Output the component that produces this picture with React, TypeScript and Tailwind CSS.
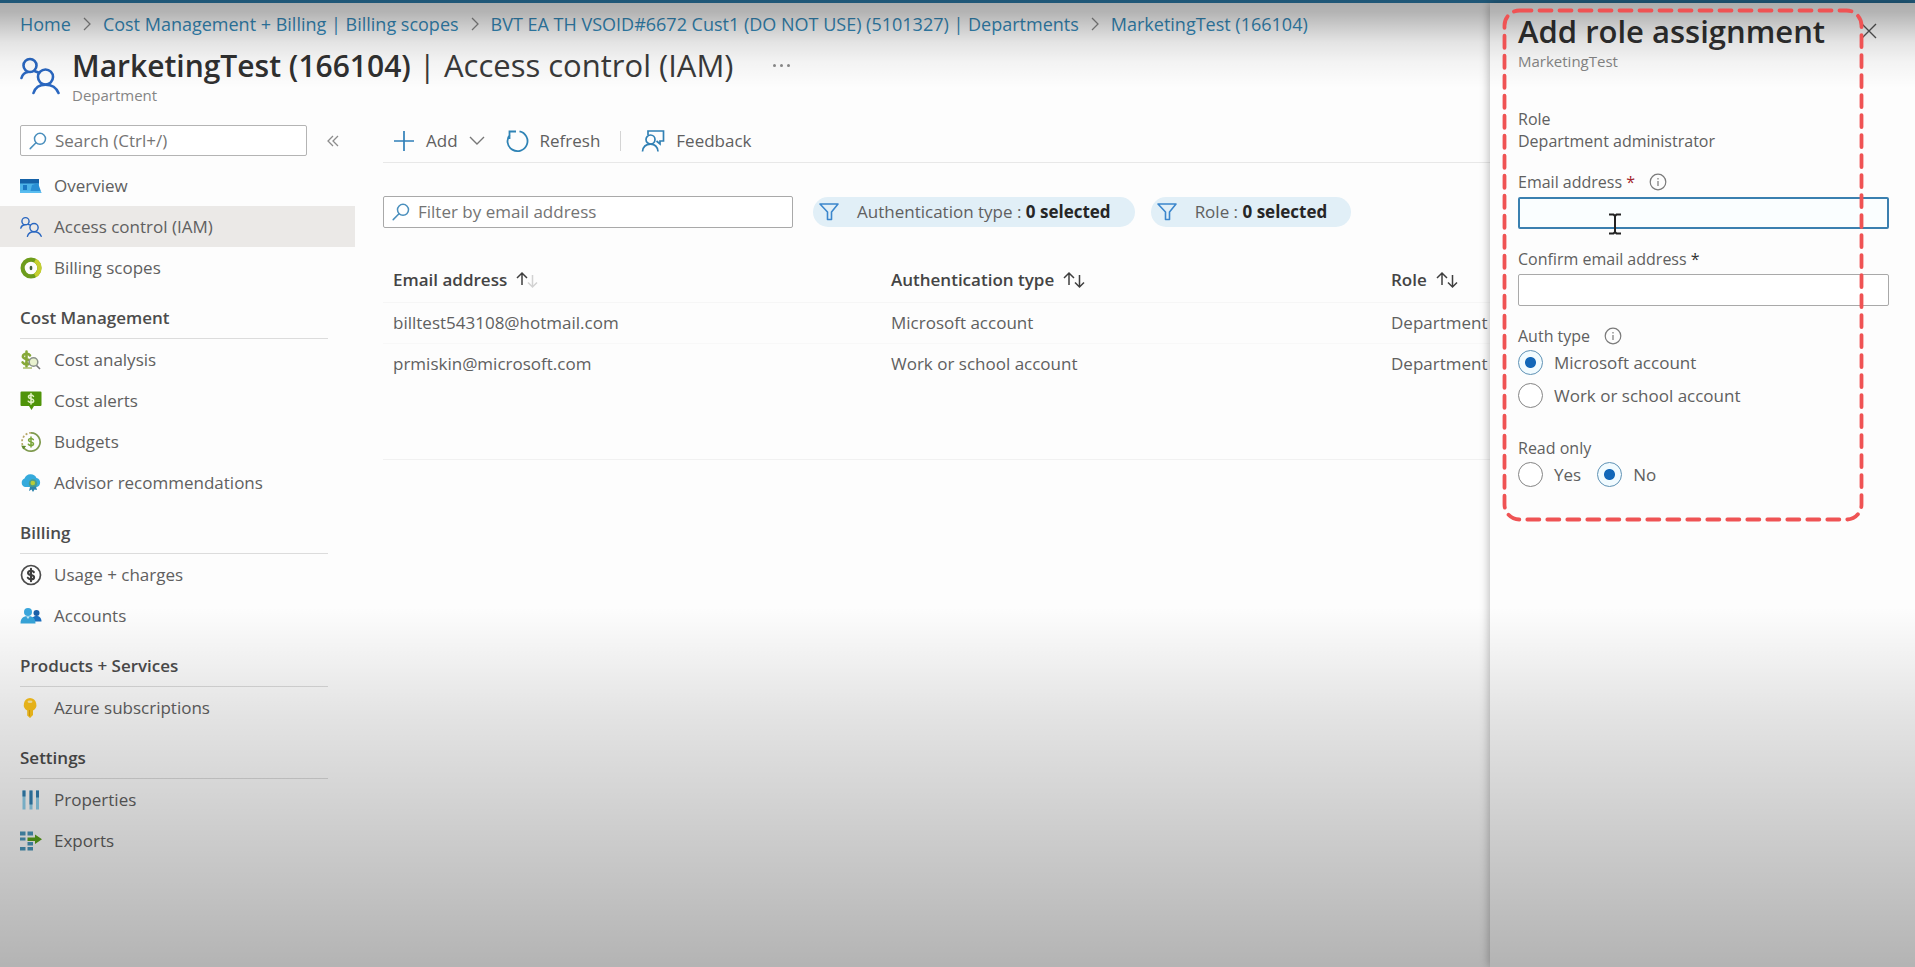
import React, { useState } from "react";

type IconProps = { className?: string };

const Dollar = ({ x, y, s, color, w = 1.5 }: { x: number; y: number; s: number; color: string; w?: number }) => (
  <g transform={`translate(${x} ${y}) scale(${s})`} fill="none" stroke={color} strokeWidth={w} strokeLinecap="round">
    <path d="M2.6-2.6C2-3.6 1-3.9 0-3.9c-1.6 0-2.7.8-2.7 2C-2.7.7 2.8-.6 2.8 2c0 1.200-1.200 2-2.800 2-1.300 0-2.300-.5-2.900-1.500M0-5.600v11.200" />
  </g>
);

const People = ({ className }: IconProps) => (
  <svg viewBox="0 0 40 38" className={className} fill="none" stroke="#2a67c0" strokeWidth="2.600" strokeLinecap="round">
    <circle cx="10" cy="8.500" r="6.500" />
    <path d="M1.500 21C2.500 17.500 5 15.500 8 15" />
    <circle cx="25.500" cy="20" r="7.500" />
    <path d="M13.500 36C15 31 19.500 27.700 25.500 27.700S36.500 31 38.500 36M15 14.200l4 1.500" />
  </svg>
);

const OverviewIcon = ({ className }: IconProps) => (
  <svg viewBox="0 0 22 22" className={className}>
    <path d="M0 4h19v14H0z" fill="#4db3e8" />
    <path d="M0 4h19v4.500H0z" fill="#1462a8" />
    <path d="M3 10h4v5H3z" fill="#1b78c4" />
    <path d="M12 10l6-2 3.500 10H10z" fill="#2a8fd4" />
    <path d="M0 16h21v2H0z" fill="#59bdf0" />
  </svg>
);

const ScopesIcon = ({ className }: IconProps) => (
  <svg viewBox="0 0 22 22" className={className} fill="none">
    <circle cx="11" cy="11" r="8.400" stroke="#6d9c1c" strokeWidth="4.200" />
    <path d="M15 3.600a8.400 8.400 0 0 1 0 14.800" stroke="#c6cf2e" strokeWidth="4.200" />
    <ellipse cx="11" cy="11" rx="1.400" ry="2.200" fill="#44603c" />
  </svg>
);

const AnalysisIcon = ({ className }: IconProps) => (
  <svg viewBox="0 0 22 22" className={className} fill="none">
    <Dollar x={6.5} y={10} s={1.35} color="#86a838" w={1.9} />
    <circle cx="13.500" cy="13" r="4.300" stroke="#8b938a" strokeWidth="1.500" fill="#e9f2cf" />
    <path d="M16.500 16.500l3.500 3.500" stroke="#777" strokeWidth="1.600" />
    <path d="M3 19h9" stroke="#a8be6a" strokeWidth="1.500" />
  </svg>
);

const AlertsIcon = ({ className }: IconProps) => (
  <svg viewBox="0 0 22 22" className={className}>
    <path d="M1.500 1.500h19a1 1 0 0 1 1 1v12.500a1 1 0 0 1-1 1H14l-2.500 4-2.500-4H1.500a1 1 0 0 1-1-1V2.500a1 1 0 0 1 1-1z" fill="#4f9409" />
    <Dollar x={11} y={8.8} s={0.95} color="#e2f2c4" w={1.6} />
  </svg>
);

const BudgetsIcon = ({ className }: IconProps) => (
  <svg viewBox="0 0 22 22" className={className} fill="none">
    <path d="M11 1.800A9.200 9.200 0 1 1 3.500 16.500" stroke="#7f9a4e" strokeWidth="1.700" />
    <path d="M2.500 14A9.200 9.200 0 0 1 11 1.800" stroke="#b7a86a" strokeWidth="1.700" strokeDasharray="2 1.800" />
    <path d="M1.200 14.500l5 .5-3 3.500z" fill="#5f8a2a" />
    <Dollar x={11} y={11} s={0.9} color="#7aa53a" w={1.7} />
  </svg>
);

const AdvisorIcon = ({ className }: IconProps) => (
  <svg viewBox="0 0 22 22" className={className}>
    <path d="M5 15a4.500 4.500 0 0 1-.5-8.500A6.500 6.500 0 0 1 16.500 6 4.700 4.700 0 0 1 17 15z" fill="#35aadc" />
    <circle cx="13" cy="11.500" r="4.200" fill="#4a9d8c" />
    <circle cx="12.800" cy="11" r="2.300" fill="#b6cc3a" />
    <path d="M10 15l-1 4 2.500-1.500L13 20l1.500-2.500L17 18l-1-3.500z" fill="#2b83ad" />
  </svg>
);

const UsageIcon = ({ className }: IconProps) => (
  <svg viewBox="0 0 22 22" className={className} fill="none">
    <circle cx="11" cy="11" r="9.500" stroke="#4c4c4c" strokeWidth="1.700" />
    <Dollar x={11} y={11} s={1.1} color="#3c3c3c" w={1.9} />
  </svg>
);

const AccountsIcon = ({ className }: IconProps) => (
  <svg viewBox="0 0 22 22" className={className}>
    <circle cx="16.500" cy="8" r="3" fill="#1b5fa8" />
    <path d="M11.500 16.500c0-4 2-5.500 5-5.500s5 2 5 5.500z" fill="#1b6fc0" />
    <circle cx="8" cy="7" r="4" fill="#3aa6dc" />
    <path d="M.5 18.500C.5 13 3.500 11 8 11s7.500 2 7.500 7.500z" fill="#36a3d8" />
    <path d="M6 11.200l2 2.800 2-2.800z" fill="#bfe6f7" />
  </svg>
);

const KeyIcon = ({ className }: IconProps) => (
  <svg viewBox="0 0 22 22" className={className}>
    <path d="M10 1a6.700 6.700 0 0 1 3 12.500V18l-3 3-2.800-2.500v-5A6.700 6.700 0 0 1 10 1z" fill="#fcc31c" />
    <ellipse cx="10" cy="4.800" rx="2.500" ry="1.200" fill="#ffe9a0" />
    <path d="M9.500 13v6" stroke="#dba30c" strokeWidth="1" />
  </svg>
);

const PropertiesIcon = ({ className }: IconProps) => (
  <svg viewBox="0 0 22 22" className={className}>
    <path d="M2.500 1.500h3v19h-3zM9.500 1.500h3v19h-3zM16 1.500h3v19h-3z" fill="#8fd0ec" />
    <path d="M2.500 1.500h3v6h-3zM9.500 1.500h3v14h-3zM16 1.500h3v7h-3z" fill="#337fb0" />
  </svg>
);

const ExportsIcon = ({ className }: IconProps) => (
  <svg viewBox="0 0 22 22" className={className}>
    <path d="M0 1.500h5.500v4H0zM7.500 1.500H13v4H7.500zM0 7.500h5.500v3H0zM7.500 12h5.500v3.500H7.500zM0 17h5.500v3.500H0zM7.500 17H13v3.500H7.500z" fill="#4a97bb" />
    <path d="M7.500 7.500H15V4.500l7 4.700-7 4.800v-3H7.500z" fill="#5aa31a" />
  </svg>
);

const SearchIcon = ({ className }: IconProps) => (
  <svg viewBox="0 0 18 18" className={className} fill="none" stroke="#4a8fbd" strokeWidth="1.500" strokeLinecap="round">
    <circle cx="11" cy="6.800" r="5.500" />
    <path d="M7 10.800L1.200 16.600" />
  </svg>
);

const InfoIcon = ({ className }: IconProps) => (
  <svg viewBox="0 0 18 18" className={className} fill="none" stroke="#7a7a7a" strokeWidth="1.200">
    <circle cx="9" cy="9" r="7.800" />
    <path d="M9 8v5M9 5v1.500" />
  </svg>
);

const FunnelIcon = () => (
  <svg viewBox="0 0 20 20" className="size-5" fill="none" stroke="#3b86cc" strokeWidth="1.600" strokeLinejoin="round">
    <path d="M1 2h18l-6.500 8v7.500h-4V10z" />
  </svg>
);

const SortIcon = ({ faded = false }: { faded?: boolean }) => (
  <svg viewBox="0 0 24 18" className="h-[18px] w-6" fill="none" stroke="#3f3f3f" strokeWidth="1.500">
    <path d="M7 14V2M2 7l5-5 5 5" />
    <path d="M17.500 4v12M13 11.500l4.500 4.500 4.500-4.500" stroke={faded ? "#d2d2d2" : "#3f3f3f"} />
  </svg>
);

const CrumbArrow = () => (
  <svg viewBox="0 0 8 14" className="h-3.5 w-2 shrink-0" fill="none" stroke="#8a8a8a" strokeWidth="1.300">
    <path d="M1 1l6 6-6 6" />
  </svg>
);

type NavItem = { label: string; Icon: (p: IconProps) => React.ReactElement; active?: boolean };
const sections: { title?: string; items: NavItem[] }[] = [
  {
    items: [
      { label: "Overview", Icon: OverviewIcon },
      { label: "Access control (IAM)", Icon: People, active: true },
      { label: "Billing scopes", Icon: ScopesIcon },
    ],
  },
  {
    title: "Cost Management",
    items: [
      { label: "Cost analysis", Icon: AnalysisIcon },
      { label: "Cost alerts", Icon: AlertsIcon },
      { label: "Budgets", Icon: BudgetsIcon },
      { label: "Advisor recommendations", Icon: AdvisorIcon },
    ],
  },
  {
    title: "Billing",
    items: [
      { label: "Usage + charges", Icon: UsageIcon },
      { label: "Accounts", Icon: AccountsIcon },
    ],
  },
  { title: "Products + Services", items: [{ label: "Azure subscriptions", Icon: KeyIcon }] },
  {
    title: "Settings",
    items: [
      { label: "Properties", Icon: PropertiesIcon },
      { label: "Exports", Icon: ExportsIcon },
    ],
  },
];

const crumbs = [
  "Home",
  "Cost Management + Billing | Billing scopes",
  "BVT EA TH VSOID#6672 Cust1 (DO NOT USE) (5101327) | Departments",
  "MarketingTest (166104)",
];

const rows = [
  ["billtest543108@hotmail.com", "Microsoft account", "Department"],
  ["prmiskin@microsoft.com", "Work or school account", "Department"],
];

function Sidebar() {
  return (
    <aside className="w-[355px] shrink-0">
      <div className="flex items-center gap-5 pl-5">
        <label className="flex h-[31px] w-[287px] items-center gap-2 rounded-xs border border-[#b4b4b4] bg-white px-2">
          <SearchIcon className="size-[18px] shrink-0" />
          <input
            type="search"
            aria-label="Search"
            placeholder="Search (Ctrl+/)"
            className="w-full min-w-0 bg-transparent outline-none placeholder:text-[#747474]"
          />
        </label>
        <button type="button" aria-label="Collapse menu">
          <svg viewBox="0 0 12 12" className="size-3" fill="none" stroke="#8c8c8c" strokeWidth="1.300">
            <path d="M6 1L1 6l5 5M11 1L6 6l5 5" />
          </svg>
        </button>
      </div>
      <nav className="pt-[9px]">
        {sections.map(({ title, items }, i) => (
          <section key={i}>
            {title && (
              <h2 className="mt-[18px] mr-[27px] ml-5 border-b border-[#dcdcdc] pb-2 leading-6 font-semibold text-[#4c4c4c]">
                {title}
              </h2>
            )}
            <ul>
              {items.map(({ label, Icon, active }) => (
                <li key={label}>
                  <a
                    href="#"
                    className={
                      active
                        ? "flex h-[41px] items-center gap-3 bg-[#ebe9e7] pl-5"
                        : "flex h-[41px] items-center gap-3 pl-5"
                    }
                  >
                    <Icon className="size-[22px] shrink-0" />
                    {label}
                  </a>
                </li>
              ))}
            </ul>
          </section>
        ))}
      </nav>
    </aside>
  );
}

function Toolbar() {
  return (
    <div className="flex h-[38px] items-center border-b border-[#e8e8e8] pb-1.5 pl-2.5">
      <button type="button" className="flex items-center gap-[11px]">
        <svg viewBox="0 0 22 22" className="size-[22px]" stroke="#2f7fb8" strokeWidth="1.700">
          <path d="M11 1v20M1 11h20" />
        </svg>
        Add
        <svg viewBox="0 0 16 10" className="h-2.5 w-4" fill="none" stroke="#777" strokeWidth="1.400">
          <path d="M1 1l7 7 7-7" />
        </svg>
      </button>
      <button type="button" className="ml-5 flex items-center gap-[11px]">
        <svg viewBox="0 0 24 24" className="size-6" fill="none" stroke="#2f83b5" strokeWidth="1.800">
          <path d="M14.500 2.300A10 10 0 1 1 5 5.500M4.500 10V2.500H11" />
        </svg>
        Refresh
      </button>
      <span className="mx-5 h-5 w-px bg-[#d4d4d4]" />
      <button type="button" className="flex items-center gap-[11px]">
        <svg viewBox="0 0 24 24" className="size-6" fill="none" stroke="#3180b4" strokeWidth="1.700">
          <path d="M7 6V2h15.500v10H19v3l-3.500-3" />
          <circle cx="9.500" cy="10.500" r="4.500" />
          <path d="M1.500 22.500C2 18 5 15.200 9.500 15.200S16.500 18 17 22.500" />
        </svg>
        Feedback
      </button>
    </div>
  );
}

function Pill({ name }: { name: string }) {
  return (
    <button
      type="button"
      className="flex h-[30px] shrink-0 items-center gap-[18px] rounded-full bg-[#e1eff7] pr-6 pl-1.5 whitespace-nowrap"
    >
      <FunnelIcon />
      <span>
        {name} : <b className="font-bold text-[#262626]">0 selected</b>
      </span>
    </button>
  );
}

function MainContent() {
  return (
    <main className="ml-7 min-w-0 flex-1 overflow-hidden">
      <Toolbar />
      <div className="mt-[33px] flex items-center">
        <label className="flex h-[32px] w-[410px] items-center gap-2 rounded-xs border border-[#a9a9a9] bg-white px-2">
          <SearchIcon className="size-[18px] shrink-0" />
          <input
            type="text"
            aria-label="Filter by email address"
            placeholder="Filter by email address"
            className="w-full min-w-0 bg-transparent outline-none placeholder:text-[#747474]"
          />
        </label>
        <div className="ml-5 flex gap-4">
          <Pill name="Authentication type" />
          <Pill name="Role" />
        </div>
      </div>
      <div className="border-b border-[#f1f1f1] pt-[30px] pb-[75px]">
        <table className="w-full table-fixed text-left whitespace-nowrap">
          <colgroup>
            <col className="w-[498px]" />
            <col className="w-[500px]" />
            <col />
          </colgroup>
          <thead>
            <tr className="h-11 border-b border-[#f6f6f6]">
              {["Email address", "Authentication type", "Role"].map((h, i) => (
                <th key={h} className="pl-2.5 font-semibold text-[#444444]">
                  <button type="button" className="flex items-center gap-2">
                    {h}
                    <SortIcon faded={i === 0} />
                  </button>
                </th>
              ))}
            </tr>
          </thead>
          <tbody>
            {rows.map((r) => (
              <tr key={r[0]} className="h-[41px] border-b border-[#f8f8f8] last:border-0">
                {r.map((c) => (
                  <td key={c} className="pl-2.5">
                    {c}
                  </td>
                ))}
              </tr>
            ))}
          </tbody>
        </table>
      </div>
    </main>
  );
}

function Radio({ name, label, checked, onSelect }: { name: string; label: string; checked: boolean; onSelect: () => void }) {
  return (
    <label className="flex h-[25px] items-center gap-[11px] text-[17px]">
      <input
        type="radio"
        name={name}
        checked={checked}
        onChange={onSelect}
        className="size-[25px] shrink-0 appearance-none rounded-full border border-[#858585] bg-white checked:border-[#5f92b5] checked:bg-[radial-gradient(circle,#1267b8_5px,#f1fbff_6px)]"
      />
      {label}
    </label>
  );
}

function RolePanel() {
  const [auth, setAuth] = useState("Microsoft account");
  const [readOnly, setReadOnly] = useState("No");
  return (
    <section className="relative w-[425px] shrink-0 bg-[#fdfdfd] pt-2 pr-[26px] pl-7 text-[16px] shadow-[-1px_0_9px_rgba(0,0,0,0.28)]">
      <div className="flex items-center justify-between pr-3">
        <h2 className="text-[31px] leading-10 font-semibold whitespace-nowrap text-[#303030]">Add role assignment</h2>
        <button type="button" aria-label="Close">
          <svg viewBox="0 0 16 16" className="size-4" stroke="#555" strokeWidth="1.400">
            <path d="M1 1l14 14M15 1L1 15" />
          </svg>
        </button>
      </div>
      <p className="text-[15px] leading-5 text-[#858585]">MarketingTest</p>
      <dl className="mt-[37px] leading-[22px]">
        <dt>Role</dt>
        <dd>Department administrator</dd>
      </dl>
      <div className="mt-[18px]">
        <div className="flex items-center gap-3.5 leading-6">
          <label htmlFor="email">
            Email address <span className="text-[#a4262c]">*</span>
          </label>
          <InfoIcon className="size-[18px]" />
        </div>
        <div className="relative mt-[3px]">
          <input
            id="email"
            type="email"
            className="block h-8 w-full rounded-xs border-2 border-[#3a80b0] bg-[#fafeff] px-2 outline-none"
          />
          <svg viewBox="0 0 14 22" className="absolute top-4 left-[90px] h-[22px] w-3.5" fill="none" stroke="#222" strokeWidth="2">
            <path d="M1 1.500h4.500L7 3l1.500-1.500H13M7 3v16M1 20.500h4.500L7 19l1.500 1.500H13" />
          </svg>
        </div>
      </div>
      <div className="mt-[18px]">
        <label htmlFor="confirm" className="block leading-6">
          Confirm email address <span className="text-[#333]">*</span>
        </label>
        <input
          id="confirm"
          type="email"
          className="mt-[3px] block h-8 w-full rounded-xs border border-[#a9a9a9] bg-white px-2 outline-none"
        />
      </div>
      <fieldset className="mt-[18px]">
        <legend className="flex items-center gap-3.5 leading-6">
          Auth type
          <InfoIcon className="size-[18px]" />
        </legend>
        <div className="mt-0.5 flex flex-col gap-2">
          {["Microsoft account", "Work or school account"].map((o) => (
            <Radio key={o} name="auth" label={o} checked={auth === o} onSelect={() => setAuth(o)} />
          ))}
        </div>
      </fieldset>
      <fieldset className="mt-7">
        <legend className="leading-6">Read only</legend>
        <div className="mt-0.5 flex gap-4">
          {["Yes", "No"].map((o) => (
            <Radio key={o} name="readonly" label={o} checked={readOnly === o} onSelect={() => setReadOnly(o)} />
          ))}
        </div>
      </fieldset>
      <svg
        viewBox="0 0 362 514"
        className="pointer-events-none absolute top-[5px] left-3 z-20 h-[514px] w-[362px]"
        fill="none"
        stroke="#ef5354"
        strokeWidth="3.800"
        strokeLinecap="round"
      >
        <rect x="2.500" y="2.500" width="357" height="509" rx="15" strokeDasharray="12 8" />
      </svg>
    </section>
  );
}

export default function App() {
  return (
    <div className="relative flex min-h-screen flex-col bg-[#fdfdfd] font-['Open_Sans','Noto_Sans',sans-serif] text-[17px] text-[#606060]">
      <div className="h-[3px] bg-[#2d7fae]" />
      <div className="flex flex-1">
        <div className="flex min-w-0 flex-1 flex-col">
          <nav aria-label="Breadcrumb" className="pt-[9px] pl-5">
            <ol className="flex items-center gap-3 text-[18px] leading-6 whitespace-nowrap text-[#358bbb]">
              {crumbs.map((c, i) => (
                <li key={c} className="flex items-center gap-3">
                  {i > 0 && <CrumbArrow />}
                  <a href="#">{c}</a>
                </li>
              ))}
            </ol>
          </nav>
          <header className="flex items-center gap-3 pt-2.5 pb-5 pl-5">
            <People className="h-[38px] w-10 shrink-0" />
            <div>
              <div className="flex items-center gap-10">
                <h1 className="text-[31px] leading-[38px] whitespace-nowrap text-[#3a3a3a]">
                  <span className="text-[30px] font-semibold text-[#303030]">MarketingTest (166104)</span> | Access control (IAM)
                </h1>
                <button type="button" aria-label="More" className="flex gap-1">
                  <span className="size-[3px] rounded-full bg-[#8a8a8a]" />
                  <span className="size-[3px] rounded-full bg-[#8a8a8a]" />
                  <span className="size-[3px] rounded-full bg-[#8a8a8a]" />
                </button>
              </div>
              <p className="text-[15px] leading-5 text-[#858585]">Department</p>
            </div>
          </header>
          <div className="flex flex-1">
            <Sidebar />
            <MainContent />
          </div>
        </div>
        <RolePanel />
      </div>
      <div className="pointer-events-none absolute inset-x-0 top-0 z-10 h-[88px] bg-[linear-gradient(to_bottom,rgba(0,0,0,0.32)_0px,rgba(0,0,0,0.29)_12px,rgba(0,0,0,0.2)_26px,rgba(0,0,0,0.1)_42px,rgba(0,0,0,0.04)_62px,transparent_88px)]" />
      <div className="pointer-events-none absolute inset-x-0 bottom-0 z-10 h-[360px] bg-[linear-gradient(to_top,rgba(0,0,0,0.29),rgba(0,0,0,0.1)_70%,transparent)]" />
    </div>
  );
}
